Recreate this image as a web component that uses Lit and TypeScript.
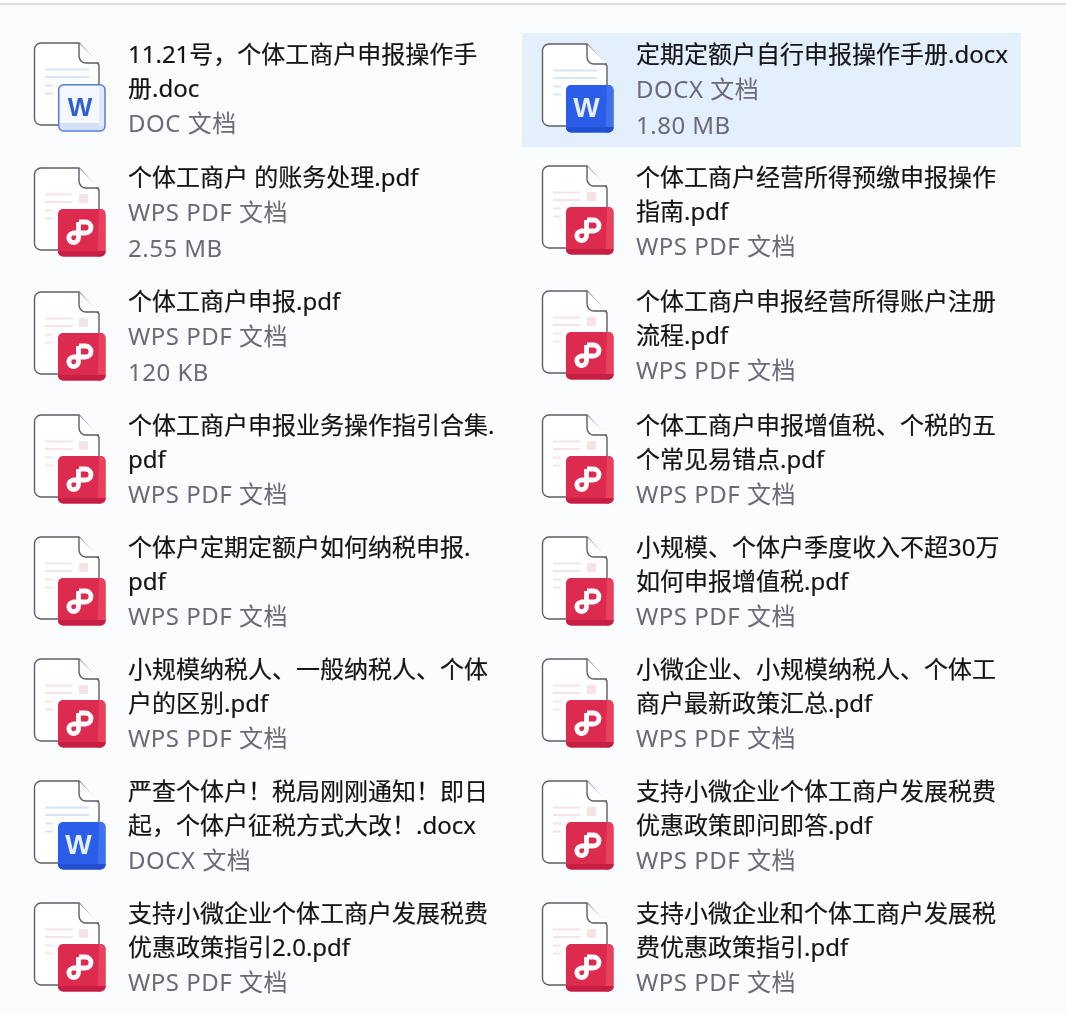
import { LitElement, html, css, svg } from "lit";
import { customElement } from "lit/decorators.js";

type Kind = "doc" | "docx" | "pdf";
interface File { kind: Kind; lines: string[]; type: string; size?: string; selected?: boolean; shift?: number; }

const pdf = "WPS PDF 文档";
const rows: { h: number; cells: File[] }[] = [
  { h: 123, cells: [
    { kind: "doc", lines: ["11.21号，个体工商户申报操作手", "册.doc"], type: "DOC 文档" },
    { kind: "docx", lines: ["定期定额户自行申报操作手册.docx"], type: "DOCX 文档", size: "1.80 MB", selected: true, shift: 1 },
  ]},
  { h: 124, cells: [
    { kind: "pdf", lines: ["个体工商户 的账务处理.pdf"], type: pdf, size: "2.55 MB", shift: 2 },
    { kind: "pdf", lines: ["个体工商户经营所得预缴申报操作", "指南.pdf"], type: pdf },
  ]},
  { h: 124, cells: [
    { kind: "pdf", lines: ["个体工商户申报.pdf"], type: pdf, size: "120 KB", shift: 2 },
    { kind: "pdf", lines: ["个体工商户申报经营所得账户注册", "流程.pdf"], type: pdf, shift: 1 },
  ]},
  { h: 122, cells: [
    { kind: "pdf", lines: ["个体工商户申报业务操作指引合集.", "pdf"], type: pdf, shift: 1 },
    { kind: "pdf", lines: ["个体工商户申报增值税、个税的五", "个常见易错点.pdf"], type: pdf, shift: 1 },
  ]},
  { h: 122, cells: [
    { kind: "pdf", lines: ["个体户定期定额户如何纳税申报.", "pdf"], type: pdf, shift: 1 },
    { kind: "pdf", lines: ["小规模、个体户季度收入不超30万", "如何申报增值税.pdf"], type: pdf, shift: 1 },
  ]},
  { h: 122, cells: [
    { kind: "pdf", lines: ["小规模纳税人、一般纳税人、个体", "户的区别.pdf"], type: pdf, shift: 1 },
    { kind: "pdf", lines: ["小微企业、小规模纳税人、个体工", "商户最新政策汇总.pdf"], type: pdf, shift: 1 },
  ]},
  { h: 122, cells: [
    { kind: "docx", lines: ["严查个体户！税局刚刚通知！即日", "起，个体户征税方式大改！.docx"], type: "DOCX 文档", shift: 1 },
    { kind: "pdf", lines: ["支持小微企业个体工商户发展税费", "优惠政策即问即答.pdf"], type: pdf, shift: 1 },
  ]},
  { h: 100, cells: [
    { kind: "pdf", lines: ["支持小微企业个体工商户发展税费", "优惠政策指引2.0.pdf"], type: pdf, shift: 1 },
    { kind: "pdf", lines: ["支持小微企业和个体工商户发展税", "费优惠政策指引.pdf"], type: pdf, shift: 1 },
  ]},
];

function sheet(kind: Kind) {
  const isPdf = kind === "pdf";
  const c = isPdf ? "#f4e3e7" : "#d9e5f6";
  return svg`
    <path d="M7 1H45L65 23V76a7 7 0 0 1-7 7H7a6.500 6.500 0 0 1-6.500-6.500V7.500A6.500 6.500 0 0 1 7 1Z" fill="#fff" stroke="#5f5d68" stroke-width="1.400"/>
    <path d="M45 1V14a7 7 0 0 0 7 7H65" fill="#fff" stroke="#5f5d68" stroke-width="1.400"/>
    <g stroke="${c}" stroke-width="1.800" fill="none">
      <path d="M11 27.500H${isPdf ? 38.5 : 55}M11 35H${isPdf ? 38.5 : 55}M11 43.500H19M11 51.500H19"/>
    </g>
    ${isPdf ? svg`<rect x="45" y="27" width="9" height="9" rx="1" fill="#f6e3e6"/>` : null}
  `;
}

function badge(kind: Kind) {
  if (kind === "pdf") {
    return svg`
      <rect x="24" y="42" width="47.500" height="47.500" rx="5" fill="#dd2b50"/>
      <path d="M65 42h1.500a5 5 0 0 1 5 5v37.500a5 5 0 0 1-5 5h-3Z" fill="#e8415e"/>
      <path d="M24 84h47.500v.5a5 5 0 0 1-5 5H29a5 5 0 0 1-5-5Z" fill="#c71f44"/>
      <path d="M45 55H51.500a5.500 5.500 0 0 1 0 11H39a4.800 4.800 0 1 0 5.500 4.800V55" fill="none" stroke="#fff" stroke-width="4.800" stroke-linejoin="round"/>
    `;
  }
  if (kind === "doc") {
    return svg`
      <rect x="24.700" y="42.700" width="46.300" height="46.300" rx="5" fill="#f5f8fe" stroke="#4f7be0" stroke-width="1.500"/>
      <path d="M26 81h44v3a4 4 0 0 1-4 4H30a4 4 0 0 1-4-4Z" fill="#d3e0f8"/>
      <path d="M65 44h1a4 4 0 0 1 4 4v36h-5Z" fill="#e3ebfb"/>
      <text x="46" y="74" text-anchor="middle" class="w small" fill="#2f5fd8">W</text>
    `;
  }
  return svg`
    <rect x="24" y="42" width="47.500" height="47.500" rx="5" fill="#2a5de8"/>
    <path d="M65 42h1.500a5 5 0 0 1 5 5v37.500a5 5 0 0 1-5 5h-3Z" fill="#3f70ee"/>
    <path d="M24 84h47.500v.5a5 5 0 0 1-5 5H29a5 5 0 0 1-5-5Z" fill="#214fd2"/>
    <text x="44.500" y="74" text-anchor="middle" class="w" fill="#e6eefc">W</text>
  `;
}

@customElement("app-root")
export class AppRoot extends LitElement {
  static styles = css`
    :host {
      display: block;
      width: 1066px;
      height: 1014px;
      overflow: hidden;
      background: #fbfcfe;
      font-family: "Noto Sans", "Noto Sans CJK SC", sans-serif;
    }
    .top {
      height: 3px;
      background: #fff;
      border-bottom: 2px solid #dcdce2;
    }
    .list {
      padding: 28px 0 0 14px;
      filter: blur(0.3px);
    }
    .row {
      display: grid;
      grid-template-columns: 508px 499px;
    }
    .cell {
      display: flex;
      align-items: flex-start;
      gap: 22px;
      height: 114px;
      box-sizing: border-box;
      padding: 4px 0 0 20px;
    }
    .cell.selected {
      background: #e3f0fc;
    }
    svg.icon {
      flex: none;
      width: 72px;
      height: 90px;
      margin-top: 5px;
      overflow: visible;
    }
    .w {
      font-family: "Liberation Sans", sans-serif;
      font-weight: 700;
      font-size: 28px;
    }
    .w.small { font-size: 26px; }
    .title {
      font-size: 24px;
      line-height: 34px;
      color: #141418;
      white-space: nowrap;
      -webkit-text-stroke: 0.2px #141418;
    }
    .title div { height: 34px; }
    .meta {
      font-size: 24px;
      line-height: 36px;
      letter-spacing: 0.5px;
      color: #6b6a76;
      white-space: nowrap;
    }
  `;

  render() {
    return html`
      <div class="top"></div>
      <div class="list">
        ${rows.map((r) => html`
          <div class="row" style="height:${r.h}px">
            ${r.cells.map((f) => html`
              <div class="cell ${f.selected ? "selected" : ""}">
                <svg class="icon" viewBox="0 0 72 90" style="transform:translateY(${f.shift ?? 0}px)">${sheet(f.kind)}${badge(f.kind)}</svg>
                <div>
                  <div class="title">${f.lines.map((l) => html`<div>${l}</div>`)}</div>
                  <div class="meta">${f.type}</div>
                  ${f.size ? html`<div class="meta">${f.size}</div>` : null}
                </div>
              </div>
            `)}
          </div>
        `)}
      </div>
    `;
  }
}
